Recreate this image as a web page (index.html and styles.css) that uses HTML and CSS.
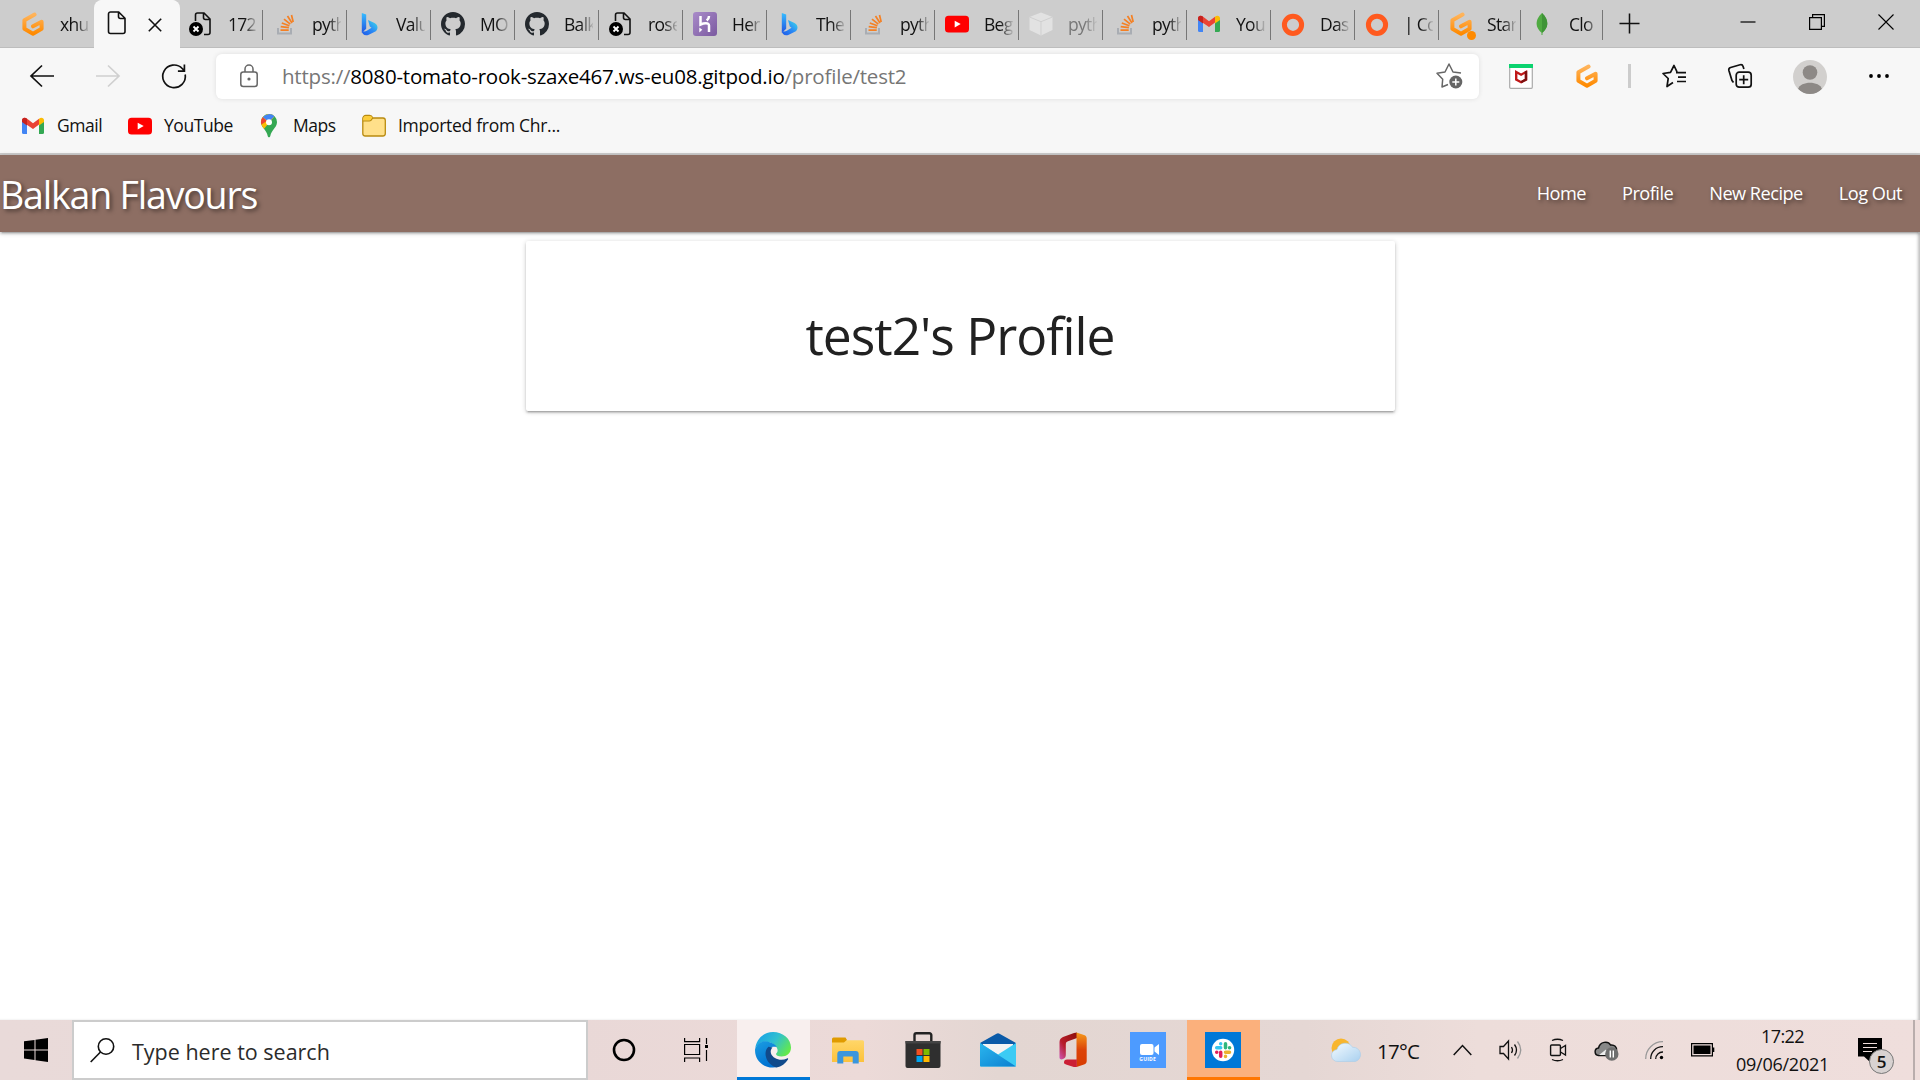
FILE: index.html
```html
<!DOCTYPE html>
<html lang="en">
<head>
<meta charset="utf-8">
<title>Balkan Flavours</title>
<link rel="stylesheet" href="styles.css">
</head>
<body>
<svg class="sprite" width="0" height="0" aria-hidden="true">
  <defs>
    <linearGradient id="gp" x1="0" y1="0" x2="0" y2="1"><stop offset="0" stop-color="#ffb45b"/><stop offset="1" stop-color="#ff8a00"/></linearGradient>
    <linearGradient id="bing1" x1="0" y1="0" x2="0" y2="1"><stop offset="0" stop-color="#37bdff"/><stop offset="1" stop-color="#2052e0"/></linearGradient>
    <linearGradient id="bing2" x1="0" y1="1" x2="1" y2="0"><stop offset="0" stop-color="#1f57e8"/><stop offset=".5" stop-color="#2a8cf5"/><stop offset="1" stop-color="#3ee0e8"/></linearGradient>
    <linearGradient id="her" x1="0" y1="0" x2="1" y2="1"><stop offset="0" stop-color="#a98bc9"/><stop offset="1" stop-color="#7b5aa0"/></linearGradient>
    <linearGradient id="ed1" x1="0" y1=".2" x2="1" y2=".7"><stop offset="0" stop-color="#18a0e8"/><stop offset=".5" stop-color="#30c0d0"/><stop offset="1" stop-color="#66eb45"/></linearGradient>
    <linearGradient id="ed2" x1="0" y1="0" x2=".5" y2="1"><stop offset="0" stop-color="#1b9de2"/><stop offset="1" stop-color="#0070d0"/></linearGradient>
    <linearGradient id="of1" x1="0" y1="1" x2="1" y2="0"><stop offset="0" stop-color="#cf58b8"/><stop offset=".4" stop-color="#b71c2a"/><stop offset="1" stop-color="#8b0f0a"/></linearGradient>
    <linearGradient id="of2" x1="0" y1="0" x2="0" y2="1"><stop offset="0" stop-color="#f59a1b"/><stop offset=".5" stop-color="#dc4409"/><stop offset="1" stop-color="#d83b01"/></linearGradient>
    <linearGradient id="cloud" x1="0" y1="0" x2="1" y2="1"><stop offset="0" stop-color="#f4fbff"/><stop offset="1" stop-color="#a9d0ef"/></linearGradient>
    <linearGradient id="fold" x1="0" y1="0" x2="0" y2="1"><stop offset="0" stop-color="#ffd668"/><stop offset="1" stop-color="#fcc23c"/></linearGradient>
    <linearGradient id="mail" x1="0" y1="0" x2="1" y2="1"><stop offset="0" stop-color="#2ab6ee"/><stop offset="1" stop-color="#0c7fd0"/></linearGradient>
  </defs>
  <symbol id="gitpod" viewBox="0 0 24 24"><path d="M13.600 2.600 3.400 8.200V16.800L12 21.700 20.600 16.800V9.800L12 14.300" fill="none" stroke="url(#gp)" stroke-width="4" stroke-linecap="round" stroke-linejoin="round"/></symbol>
  <symbol id="page" viewBox="0 0 24 24"><path d="M5.500 1h8.200L20 7.300v13.200a2 2 0 0 1-2 2H5.500a2 2 0 0 1-2-2V3a2 2 0 0 1 2-2zM13.500 1v4.500a2 2 0 0 0 2 2H20" fill="none" stroke="#111" stroke-width="1.600"/></symbol>
  <symbol id="pagex" viewBox="0 0 24 24"><path d="M6.500 9V3a2 2 0 0 1 2-2h6.500L21 7v13.500a2 2 0 0 1-2 2h-4M14.500 1v4.500a2 2 0 0 0 2 2H21" fill="none" stroke="#111" stroke-width="1.600"/><circle cx="7" cy="17" r="7" fill="#000"/><path d="m4.500 14.500 5 5m0-5-5 5" stroke="#fff" stroke-width="1.800"/></symbol>
  <symbol id="so" viewBox="0 0 24 24"><path d="M5 16v5.500h13V16" fill="none" stroke="#a9adb3" stroke-width="2"/><path d="M7.500 18.200h8.200M7.700 14.700l8.200 1M8.800 11l7.600 2.800M11 7.200l6.300 5M14.500 4l4.500 7M18.500 3l1.700 7" stroke="#f48024" stroke-width="1.700"/></symbol>
  <symbol id="bing" viewBox="0 0 24 24"><path d="m4.800 1 4.400 1.600v14.200L4.800 21z" fill="url(#bing1)"/><path d="m11 8 6.500 3c4 2 3.500 6.500 1.300 8.200l-7 3.500c-3.500 1.500-7 0-7-4.200 1.500 1.500 3.500 1.200 5 .2l4.700-2.900-1.700-1.300z" fill="url(#bing2)"/></symbol>
  <symbol id="gh" viewBox="0 0 16 16"><path fill="#24292e" d="M8 0C3.580 0 0 3.580 0 8c0 3.540 2.290 6.530 5.470 7.590.4.070.55-.17.55-.38 0-.19-.01-.82-.01-1.490-2.010.37-2.530-.49-2.690-.94-.09-.23-.48-.94-.82-1.130-.28-.15-.68-.52-.01-.53.63-.01 1.080.58 1.230.82.72 1.210 1.870.87 2.330.66.07-.52.28-.87.51-1.070-1.780-.2-3.640-.89-3.640-3.950 0-.87.31-1.590.82-2.150-.08-.2-.36-1.020.08-2.120 0 0 .67-.21 2.200.82.64-.18 1.320-.27 2-.27s1.360.09 2 .27c1.530-1.040 2.200-.82 2.200-.82.44 1.100.16 1.920.08 2.120.51.56.82 1.270.82 2.150 0 3.070-1.870 3.750-3.650 3.950.29.25.54.73.54 1.480 0 1.070-.01 1.930-.01 2.200 0 .21.15.46.55.38A8.010 8.010 0 0 0 16 8c0-4.420-3.580-8-8-8z"/></symbol>
  <symbol id="heroku" viewBox="0 0 24 24"><rect width="24" height="24" rx="3" fill="url(#her)"/><path d="M7.500 4v8.500c3-1.300 8.500-2.500 8.500 1V20M16 4c0 2-1 3.500-2.300 4.500" fill="none" stroke="#fff" stroke-width="2.500"/><path d="m6.300 15.500 3 2.300-3 2.700z" fill="#fff"/></symbol>
  <symbol id="yt" viewBox="0 0 24 24"><rect y="3.700" width="24" height="16.800" rx="3.500" fill="#f00"/><path d="m9.700 8.700 6 3.400-6 3.400z" fill="#fff"/></symbol>
  <symbol id="cube" viewBox="0 0 24 24"><path d="M12 .5 23.500 5v13L12 23.500.5 18V5z" fill="#e2e2e2"/><path d="M.5 5 12 9.700 23.500 5M12 9.700v13.500" stroke="#cfcfcf" fill="none"/></symbol>
  <symbol id="gmail" viewBox="0 0 24 24"><path d="M1 6v12.500A1.500 1.500 0 0 0 2.500 20H6V9z" fill="#4285f4"/><path d="M23 6v12.500a1.500 1.500 0 0 1-1.500 1.500H18V9z" fill="#34a853"/><path d="M1 6.500C1 3.500 4 3 5.800 4.500L12 9.200l6-4.500v5.800L12 15 1 7.500z" fill="#ea4335"/><path d="M1 6.500v1.500l5 3.500V4.700C4 3 1 3.500 1 6.500z" fill="#c5221f"/><path d="M23 6.500V8l-5 3.500V4.700C20 3 23 3.500 23 6.500z" fill="#fbbc04"/></symbol>
  <symbol id="ring" viewBox="0 0 24 24"><circle cx="12" cy="12.800" r="8.600" fill="none" stroke="#ff5a1f" stroke-width="5"/></symbol>
  <symbol id="leaf" viewBox="0 0 24 24"><path d="M11 1c4 4 5.300 7 5.300 11 0 3.500-2.300 6.500-4.800 8.700V23h-1v-2.300C8 18.500 5.600 15.500 5.600 12 5.600 8 7 5 11 1z" fill="#4faa41"/><path d="M11 1c4 4 5.300 7 5.300 11 0 3.500-2.300 6.500-5.300 8.700z" fill="#3f9437"/></symbol>
  <symbol id="pin" viewBox="0 0 24 24"><path d="M12 0a8 8 0 0 1 8 8.300c0 3-1.800 5-3.500 7.200-1.500 2-2.600 3.500-3.200 6.500-.4 1.800-2.200 1.800-2.600 0-.6-3-1.700-4.500-3.200-6.500C5.800 13.300 4 11.300 4 8.300A8 8 0 0 1 12 0z" fill="#34a853"/><path d="M4 8.300c0 3 1.800 5 3 6.500l10.500-12.400A8 8 0 0 0 4 8.300z" fill="#fbbc04"/><path d="M5.700 3.200 12 8l5.500-5.700A8 8 0 0 0 5.700 3.200z" fill="#4285f4"/><path d="M5.700 3.200A8 8 0 0 0 4.300 10.500L10 7z" fill="#ea4335"/><circle cx="12" cy="8.200" r="3" fill="#fff"/></symbol>
  <symbol id="ffold" viewBox="0 0 24 24"><path d="M.8 4.500a3 3 0 0 1 3-3h3.700c2 0 2.700 1 3.300 2.500H21a2.300 2.300 0 0 1 2.300 2.300V19.500a2.500 2.500 0 0 1-2.500 2.500H3.300a2.500 2.500 0 0 1-2.500-2.500z" fill="#ffe08a" stroke="#b98b10" stroke-width="1.300"/><path d="M1.400 6.800h5.800c2.300 0 2.500-1.200 3.500-2.500C10 2.800 9.300 2.100 7.500 2.100H4c-1.500 0-2.600 1-2.600 2.500z" fill="#fccd3a"/><path d="M.8 7h6.500c1.800 0 2.500-1.200 3.500-3" fill="none" stroke="#b98b10" stroke-width="1.200"/></symbol>
</svg>

<header class="browser">
  <div class="tabstrip">
    <div class="tab first"><svg class="fav"><use href="#gitpod"/></svg><span class="t">xhu</span></div>
    <div class="tab active"><svg class="fav"><use href="#page"/></svg><svg class="x" viewBox="0 0 14 14"><path d="m.8.8 12.400 12.400m0-12.400L.8 13.200" stroke="#111" stroke-width="1.600"/></svg></div>
    <div class="tab"><svg class="fav"><use href="#pagex"/></svg><span class="t">172</span></div>
    <div class="tab"><svg class="fav"><use href="#so"/></svg><span class="t">pyth</span></div>
    <div class="tab"><svg class="fav"><use href="#bing"/></svg><span class="t">Valu</span></div>
    <div class="tab"><svg class="fav"><use href="#gh"/></svg><span class="t">MO</span></div>
    <div class="tab"><svg class="fav"><use href="#gh"/></svg><span class="t">Balk</span></div>
    <div class="tab"><svg class="fav"><use href="#pagex"/></svg><span class="t">rose</span></div>
    <div class="tab"><svg class="fav"><use href="#heroku"/></svg><span class="t">Her</span></div>
    <div class="tab"><svg class="fav"><use href="#bing"/></svg><span class="t">The</span></div>
    <div class="tab"><svg class="fav"><use href="#so"/></svg><span class="t">pyth</span></div>
    <div class="tab"><svg class="fav"><use href="#yt"/></svg><span class="t">Beg</span></div>
    <div class="tab"><svg class="fav"><use href="#cube"/></svg><span class="t dim">pyth</span></div>
    <div class="tab"><svg class="fav"><use href="#so"/></svg><span class="t">pyth</span></div>
    <div class="tab"><svg class="fav"><use href="#gmail"/></svg><span class="t">You</span></div>
    <div class="tab"><svg class="fav"><use href="#ring"/></svg><span class="t">Das</span></div>
    <div class="tab"><svg class="fav"><use href="#ring"/></svg><span class="t">| Co</span></div>
    <div class="tab narrow dot"><svg class="fav"><use href="#gitpod"/></svg><span class="t">Star</span></div>
    <div class="tab narrow"><svg class="fav"><use href="#leaf"/></svg><span class="t">Clo</span></div>
    <svg class="plus" viewBox="0 0 22 22"><path d="M11 .5v21M.5 11h21" stroke="#111" stroke-width="1.600"/></svg>
    <div class="winctl">
      <svg viewBox="0 0 16 16"><path d="M.5 8h15" stroke="#000" stroke-width="1.200"/></svg>
      <svg viewBox="0 0 16 16"><path d="M.6 3.600h11.800v11.800H.6zM3.600 3.600V.6h11.800v11.800h-3" fill="none" stroke="#000" stroke-width="1.200"/></svg>
      <svg viewBox="0 0 16 16"><path d="m.5.5 15 15m0-15-15 15" stroke="#000" stroke-width="1.100"/></svg>
    </div>
  </div>

  <div class="toolbar">
    <svg class="nav" viewBox="0 0 24 24"><path d="M24 12H1M12 1.500 1 12l11 10.500" fill="none" stroke="#111" stroke-width="1.700"/></svg>
    <svg class="nav" viewBox="0 0 24 24"><path d="M0 12h23M12 1.500 23 12 12 22.500" fill="none" stroke="#d0d0d0" stroke-width="1.700"/></svg>
    <svg class="nav" viewBox="0 0 24 24"><path d="M23.200 10.500A11.300 11.300 0 1 1 20.200 4.500l2 2.200M22.400.5v6.700h-6.500" fill="none" stroke="#111" stroke-width="1.700"/></svg>
    <div class="address">
      <svg class="lock" viewBox="0 0 18 24"><rect x=".8" y="8" width="16.400" height="14.500" rx="2.500" fill="none" stroke="#666" stroke-width="1.500"/><path d="M5 8V5a4 4 0 0 1 8 0v3" fill="none" stroke="#666" stroke-width="1.500"/><circle cx="9" cy="15" r="1.600" fill="#666"/></svg>
      <span class="url">https://<b>8080-tomato-rook-szaxe467.ws-eu08.gitpod.io</b>/profile/test2</span>
      <svg class="addstar" viewBox="0 0 27 26"><path d="M12 21.500 6 24l.7-7.800L1 10.300l8-1.300 4-8 4 8 8 1" fill="none" stroke="#666" stroke-width="1.500" stroke-linejoin="round"/><circle cx="19.800" cy="19" r="6.500" fill="#666"/><path d="M19.800 15.500v7M16.300 19h7" stroke="#fff" stroke-width="1.500"/></svg>
    </div>
    <svg class="mca" viewBox="0 0 24 25"><rect x=".7" y=".7" width="22.600" height="23.600" rx="1" fill="#fff" stroke="#aaa" stroke-width="1.200"/><path d="M0 0h24v4H0z" fill="#0bd36f"/><path d="M7.200 8v7.500l4.900 2.700 4.900-2.700V8l-4.900 2.700z" fill="none" stroke="#c01818" stroke-width="2.400"/><path d="M17 7v8.500l-4.900 2.700" fill="none" stroke="#7d1010" stroke-width="2.400"/></svg>
    <svg class="gp2"><use href="#gitpod"/></svg>
    <span class="sep"></span>
    <svg class="tb" viewBox="0 0 24 24"><path d="M11 18.500 5 22.500l1.200-8L1 9.500l7.500-1.200L12 1.500l3 6.300M14 8.700h10M16 13.200h8M15 17.500h9" fill="none" stroke="#111" stroke-width="1.700" stroke-linejoin="round"/></svg>
    <svg class="tb" viewBox="0 0 24 24"><rect x="8.200" y="8.200" width="15" height="15" rx="3" fill="none" stroke="#111" stroke-width="1.700"/><path d="M15.700 11.200v9M11.200 15.700h9M5.500 18.500 4 16.500.9 6.500a2.500 2.500 0 0 1 1.700-3l9.500-2.700a2.500 2.500 0 0 1 3 1.700l.8 2.500" fill="none" stroke="#111" stroke-width="1.700"/></svg>
    <svg class="avatar" viewBox="0 0 34 34"><clipPath id="av"><circle cx="17" cy="17" r="17"/></clipPath><g clip-path="url(#av)"><path d="M0 0h34v34H0z" fill="#d2d0ce"/><circle cx="17" cy="12.500" r="7.300" fill="#8d8986"/><path d="M5 29c2.500-8.500 21.500-8.500 24 0l-6 5H11z" fill="#8d8986"/></g></svg>
    <svg class="dots" viewBox="0 0 20 4"><circle cx="2" cy="2" r="1.900"/><circle cx="10" cy="2" r="1.900"/><circle cx="18" cy="2" r="1.900"/></svg>
  </div>

  <div class="bookmarks">
    <a class="bk b1"><svg class="fav"><use href="#gmail"/></svg><span>Gmail</span></a>
    <a class="bk b2"><svg class="fav"><use href="#yt"/></svg><span>YouTube</span></a>
    <a class="bk b3"><svg class="fav"><use href="#pin"/></svg><span>Maps</span></a>
    <a class="bk b4"><svg class="fav"><use href="#ffold"/></svg><span>Imported from Chr...</span></a>
  </div>
</header>

<main class="site">
  <nav class="sitenav">
    <span class="brand">Balkan Flavours</span>
    <ul class="links">
      <li>Home</li><li>Profile</li><li>New Recipe</li><li>Log Out</li>
    </ul>
  </nav>
  <section class="card"><h3>test2's Profile</h3></section>
</main>

<footer class="taskbar">
  <div class="start"><svg width="24" height="24" viewBox="0 0 24 24"><path d="M0 3.300 10.500 1.900v9.500H0zM11.500 1.700 24 0v11.400H11.500zM0 12.500h10.500V22L0 20.600zM11.500 12.500H24V24l-12.500-1.800z"/></svg></div>
  <div class="search"><svg width="25" height="25" viewBox="0 0 25 25"><circle cx="16" cy="8.500" r="7.700" fill="none" stroke="#111" stroke-width="1.600"/><path d="M10.500 14 .7 24" stroke="#111" stroke-width="1.600"/></svg><span>Type here to search</span></div>
  <div class="cell c1"><svg width="24" height="24" viewBox="0 0 24 24"><circle cx="12" cy="12" r="10" fill="none" stroke="#000" stroke-width="2.600"/></svg></div>
  <div class="cell c2"><svg width="25" height="24" viewBox="0 0 25 24"><path d="M.6 0v3.600h15V0M.6 6.500h15v10H.6zM.6 24v-4h15v4M22.500 0v6M22.500 12v11" fill="none" stroke="#000" stroke-width="1.200"/><path d="M21 7h3v3h-3z"/></svg></div>
  <div class="cell app edge"><svg width="36" height="36" viewBox="0 0 36 36"><path d="M.2 17C1 7 8.500 0 18 0c10 0 18 7 18 15.500 0 6-4.500 9-9.500 9-4 0-6-1.500-5.300-3 1.500-1.500 1.600-3 1.200-4.500C21 12.500 15 9 9 9.800 4.500 10.500 1 14 .2 17z" fill="url(#ed1)"/><path d="M.1 17C2 11 7 8.800 12 9.500c5.500.8 9.500 4 9.500 5.500-6-1-8.500 2-8.500 6 0 6 5 11.500 11 13.500C13 38.500-1 31 .1 17z" fill="url(#ed2)"/><path d="M13.500 14.800C8 19 10 32 21.500 35.500c5-1 9-4 11.500-8 .5-1-.3-1.500-1-1-6 3-14 .5-16-5-.8-2.500 0-4.500 1.500-6z" fill="#114a8b"/></svg></div>
  <div class="cell app"><svg width="32" height="27" viewBox="0 0 32 27"><path d="M0 2a1.500 1.500 0 0 1 1.500-1.500h12L15 3l-1.500 3H0z" fill="#e09b00"/><path d="M0 5.500h12l2.500-2.200H30.500A1.500 1.500 0 0 1 32 4.800V25H0z" fill="url(#fold)"/><path d="M5.300 26.500V17a3 3 0 0 1 3-3h15.400a3 3 0 0 1 3 3v9.500h-6V19.500h-9.400v7z" fill="#3a96dd"/></svg></div>
  <div class="cell app"><svg width="36" height="36" viewBox="0 0 36 36"><path d="M9.500 10V3A1.800 1.800 0 0 1 11.300 1.200h13.200A1.800 1.800 0 0 1 26.300 3v7" fill="none" stroke="#222" stroke-width="2.400"/><path d="M.5 9h35v25a2 2 0 0 1-2 2h-31a2 2 0 0 1-2-2z" fill="#2f2f2f"/><path d="M.5 9h35v2.500H.5z" fill="#444"/><path d="M11.500 17h6v6h-6z" fill="#f25022"/><path d="M18.500 17h6v6h-6z" fill="#7fba00"/><path d="M11.500 24h6v6h-6z" fill="#00a4ef"/><path d="M18.500 24h6v6h-6z" fill="#ffb900"/></svg></div>
  <div class="cell app"><svg width="36" height="34" viewBox="0 0 36 34"><path d="M0 10 16.500.8a3 3 0 0 1 3 0L36 10l-2 6H2z" fill="#0a5aa8"/><path d="M3 11h30v14H3z" fill="#f3f3f3"/><path d="m0 10 18 11.500L36 10v22.500a1 1 0 0 1-1 1H1a1 1 0 0 1-1-1z" fill="#3ccbf4"/><path d="m0 10 36 23.500H1a1 1 0 0 1-1-1z" fill="url(#mail)"/></svg></div>
  <div class="cell app"><svg width="28" height="36" viewBox="0 0 28 36"><path d="M15 1 4 5Q.5 6.500.5 10v15.500c0 2 2 2.500 3.500 1.500 2-1 2.800-2 2.800-4V12.500c0-2 .7-2.700 2.200-3.300l9-3.200V.5z" fill="url(#of1)"/><path d="M17.500.5 25 3c1.800.6 2.700 1.700 2.700 3.500V29c0 2-1 3-2.700 3.600L17.500 35z" fill="url(#of2)"/><path d="M5 30.500c0-2 1-3 3-3h9.800V35h-3L7 32.500C5.700 32 5 31.500 5 30.500z" fill="#cb1f35"/></svg></div>
  <div class="cell app"><svg width="36" height="36" viewBox="0 0 36 36"><path d="M0 0h36v36H0z" fill="#4d9bff"/><rect x="10" y="12" width="13.500" height="11" rx="2" fill="#fff"/><path d="m24.500 15.500 4.500-3.500v11l-4.500-3.500z" fill="#fff"/><text x="9.300" y="28.800" textLength="16.500" class="guide">GUIDE</text></svg></div>
  <div class="cell app slack"><svg width="36" height="36" viewBox="0 0 36 36"><path d="M0 0h36v36H0z" fill="#0078d7"/><circle cx="18" cy="18" r="11.200" fill="#fff"/><g fill="none" stroke-width="3.500" stroke-linecap="round"><path d="M15.700 11.700v.1M11.700 15.800h4" stroke="#36c5f0"/><path d="M20.500 11.700v4M24.500 15.800h.1" stroke="#2eb67d"/><path d="M20.500 20.300h4M20.500 24.300v.1" stroke="#ecb22e"/><path d="M15.700 20.300v4M11.700 20.300h.1" stroke="#e01e5a"/></g></svg></div>
  <div class="weather"><svg width="32" height="25" viewBox="0 0 32 25"><circle cx="10" cy="10" r="9.500" fill="#f8b62d"/><path d="M7 23.500a6 6 0 0 1-1-12 8.500 8.500 0 0 1 15.500-2.200 7.300 7.300 0 0 1 3 14.200z" fill="url(#cloud)" stroke="#a8cdea" stroke-width=".6"/></svg><span>17°C</span></div>
  <div class="tray">
    <svg width="19" height="12" viewBox="0 0 19 12"><path d="m.7 11 8.800-9.500 8.800 9.500" fill="none" stroke="#111" stroke-width="1.500"/></svg>
    <svg width="24" height="20" viewBox="0 0 24 20"><path d="M1 6.500h3.500L9.500 1v18l-5-5.500H1z" fill="none" stroke="#111" stroke-width="1.300"/><path d="M12.500 7q2 3 0 6M15.500 4.500q4 5.500 0 11" fill="none" stroke="#111" stroke-width="1.300"/><path d="M18.500 1.500q6.500 8.500 0 17" fill="none" stroke="#999" stroke-width="1.300"/></svg>
    <svg width="18" height="24" viewBox="0 0 18 24"><rect x="1.600" y="7" width="9.800" height="10.500" rx="1" fill="none" stroke="#111" stroke-width="1.400"/><path d="m11.500 10.500 5-3v9.500l-5-3M3 2.500Q8.500 0 14 2.500M3 21.500q5.500 2.500 11 0" fill="none" stroke="#111" stroke-width="1.300"/></svg>
    <svg width="25" height="21" viewBox="0 0 25 21"><path d="M4.500 15.500C0 15 0 8.500 4.500 8 6 1.500 14 .5 16.500 5c4-.5 6.500 2 6 5.500l-5 5z" fill="#888" stroke="#111" stroke-width="1.500"/><path d="m5 15 7-5.500 4 5.500z" fill="#eee"/><circle cx="17.800" cy="14" r="6.700" fill="#6f6f6f"/><path d="M16.300 10.500v7M19.300 10.500v7" stroke="#fff" stroke-width="1.400"/></svg>
    <svg width="19" height="19" viewBox="0 0 19 19"><path d="M.7 18A17 17 0 0 1 18 .7" fill="none" stroke="#999" stroke-width="1.300"/><path d="M5.700 18A12 12 0 0 1 18 5.700M10.700 18A7 7 0 0 1 18 11" fill="none" stroke="#111" stroke-width="1.300"/><circle cx="16.500" cy="16.500" r="1.700"/></svg>
    <svg width="24" height="14" viewBox="0 0 24 14"><path d="M.6.6h20.800v12.300H.6z" fill="none" stroke="#000" stroke-width="1.200"/><path d="M2.500 2.500h17v8.500h-17zM22 4.500h1.300v4.500H22z"/></svg>
  </div>
  <div class="clock"><span class="time">17:22</span><span class="date">09/06/2021</span></div>
  <div class="notes"><svg width="24" height="24" viewBox="0 0 24 24"><path d="M0 0h24v18.500H12V24l-6-5.500H0z"/><path d="M5 5.500h14M5 9.500h14M5 13.500h9" stroke="#eedddb" stroke-width="1.200"/></svg><span class="badge">5</span></div>
  <div class="peek"></div>
</footer>
</body>
</html>
```
FILE: styles.css
```css
* { box-sizing: border-box; }
body {
  margin: 0;
  width: 1920px;
  height: 1080px;
  display: flex;
  flex-direction: column;
  overflow: hidden;
  background: #fff;
  color: #111;
  font-family: "Open Sans", "Noto Sans", sans-serif;
}
svg { display: block; flex: none; overflow: visible; }
.sprite { position: absolute; }
.fav { width: 24px; height: 24px; }

/* Browser chrome */
.browser { height: 155px; background: #f7f7f7; border-bottom: 2px solid #ccc; }
.tabstrip {
  height: 48px;
  padding-left: 11px;
  display: flex;
  align-items: flex-start;
  background: #cdcdcd;
  box-shadow: inset 0 -1px #bdbdbd;
}
.tab {
  width: 84px;
  height: 30px;
  margin-top: 10px;
  padding-left: 10px;
  display: flex;
  align-items: center;
  position: relative;
  border-right: 1px solid #777;
}
.tab .fav { margin-top: -2px; }
.tab.first { border: 0; }
.tab.narrow { width: 82px; }
.tab.narrow .t { margin-left: 14px; }
.tab.active {
  height: 48px;
  margin-top: 0;
  padding: 0 0 0 10px;
  border: 0;
  border-radius: 8px 8px 0 0;
  background: #f7f7f7;
  box-shadow: -1px 0 #f7f7f7, 1px 0 #f7f7f7;
}
.tab .x { width: 14px; height: 14px; margin: 2px 0 0 19px; }
.t {
  margin-left: 15px;
  width: 29px;
  overflow: hidden;
  white-space: nowrap;
  font-size: 17.5px;
  line-height: 30px;
  letter-spacing: -.7px;
  margin-top: -3px;
  mask-image: linear-gradient(90deg, #000 55%, transparent 105%);
}
.t.dim { color: #777; }
.dot::after {
  content: "";
  position: absolute;
  left: 28px;
  top: 21px;
  width: 9px;
  height: 9px;
  border-radius: 50%;
  background: #ff8a00;
}
.plus { width: 21px; height: 21px; margin: 13px 0 0 16px; }
.winctl { display: flex; gap: 53px; margin: 14px 26px 0 auto; }
.winctl svg { width: 16px; height: 16px; }

.toolbar { height: 56px; display: flex; align-items: center; padding-left: 30px; }
.nav { width: 24px; height: 24px; margin-right: 42px; }
.address {
  width: 1263px;
  height: 45px;
  margin-left: -12px;
  padding: 0 16px 0 24px;
  display: flex;
  align-items: center;
  border-radius: 6px;
  background: #fff;
  box-shadow: 0 0 5px rgba(0, 0, 0, .1);
}
.lock { width: 18px; height: 24px; }
.url {
  margin-left: 24px;
  font-size: 20.5px;
  line-height: 30px;
  letter-spacing: -.2px;
  white-space: nowrap;
  color: #767676;
}
.url b { font-weight: 400; color: #000; }
.addstar { width: 27px; height: 26px; margin-left: auto; }
.mca { width: 24px; height: 25px; margin-left: 30px; }
.gp2 { width: 24px; height: 24px; margin-left: 42px; }
.sep { width: 3px; height: 24px; margin: 0 31px 0 29px; background: #ccc; }
.tb { width: 24px; height: 24px; margin-right: 42px; }
.avatar { width: 34px; height: 34px; margin-left: -1px; margin-top: 1px; }
.dots { width: 20px; height: 4px; margin-left: 42px; }

.bookmarks {
  height: 42px;
  padding-left: 21px;
  display: flex;
  align-items: center;
  font-size: 17.5px;
  letter-spacing: -.45px;
  white-space: nowrap;
}
.bk { display: flex; align-items: center; gap: 12px; }
.bk .fav { margin-top: 2px; }
.b1 { width: 107px; }
.b2 { width: 129px; }
.b3 { width: 105px; }
.b4 span { letter-spacing: -.29px; }

/* Site */
.site { flex: 1; min-height: 0; box-shadow: inset -3px 0 3px -1px rgba(0, 0, 0, .25); }
.sitenav {
  height: 77px;
  display: flex;
  justify-content: space-between;
  align-items: center;
  background: #8d6e63;
  color: #fff;
  box-shadow: 0 2px 2px 0 rgba(0,0,0,.14), 0 3px 1px -2px rgba(0,0,0,.12), 0 1px 5px 0 rgba(0,0,0,.2);
  text-shadow: 2px 2px 4px rgba(0, 0, 0, .5);
}
.brand { font-size: 37.5px; letter-spacing: -1.18px; white-space: nowrap; padding-top: 2px; }
.links {
  margin: 0;
  padding: 0 18px 1px 0;
  display: flex;
  gap: 36px;
  list-style: none;
  font-size: 18.2px;
  letter-spacing: -.52px;
}
.card {
  width: 869px;
  height: 170px;
  margin: 9px auto 0;
  border-radius: 2px;
  background: #fff;
  text-align: center;
  box-shadow: 0 2px 2px 0 rgba(0,0,0,.14), 0 3px 1px -2px rgba(0,0,0,.12), 0 1px 5px 0 rgba(0,0,0,.2);
}
.card h3 {
  margin: 0;
  padding-top: 59px;
  font-size: 51.5px;
  font-weight: 400;
  line-height: 70px;
  letter-spacing: -1px;
  color: #212121;
}

/* Taskbar */
.taskbar {
  height: 60px;
  display: flex;
  align-items: stretch;
  background: linear-gradient(90deg, #e9dad9 0, #e9d8d7 30%, #ecdad8 45%, #e3d6d2 52%, #e5d7d4 68%, #edddda 77%, #efdedc 100%);
}
.start { width: 72px; display: flex; align-items: center; justify-content: center; }
.search {
  width: 516px;
  padding: 0 0 0 16px;
  border: 2px solid #ccc;
  display: flex;
  align-items: center;
  gap: 17px;
  background: #fff;
  font-size: 21.5px;
  white-space: nowrap;
  color: #2b2b2b;
}
.search span { margin-top: 2px; }
.cell { width: 75px; display: flex; align-items: center; justify-content: center; }
.c1 { width: 72px; }
.c2 { width: 77px; padding-right: 5px; }
.app { width: 73px; margin-right: 2px; padding-right: 1px; }
.edge { background: #f8efee; border-bottom: 3px solid #0078d7; }
.slack { background: #fbb07c; border-bottom: 3px solid #ff7600; }
.edge svg, .slack svg { margin-top: 3px; }
.guide { font: 700 5px "Open Sans", sans-serif; fill: #fff; }
.weather {
  display: flex;
  align-items: center;
  margin-left: 69px;
  gap: 14px;
  width: 122px;
  font-size: 20.5px;
  letter-spacing: -.7px;
}
.weather span { margin-top: 1px; }
.tray { display: flex; align-items: center; justify-content: space-between; width: 262px; }
.clock {
  width: 115px;
  display: flex;
  flex-direction: column;
  align-items: center;
  margin-left: 10px;
  padding-top: 2px;
  font-size: 18px;
  line-height: 28px;
}
.time { letter-spacing: -.6px; }
.date { letter-spacing: -.25px; }
.notes { position: relative; padding: 18px 0 0 18px; }
.badge {
  position: absolute;
  left: 29px;
  top: 29px;
  width: 25px;
  height: 25px;
  border: 1px solid #777;
  border-radius: 50%;
  background: #d8d2d1;
  text-align: center;
  font-size: 17px;
  font-weight: 600;
  line-height: 23px;
}
.peek { margin-left: auto; width: 7px; border-left: 2px solid #b9adac; }
```
